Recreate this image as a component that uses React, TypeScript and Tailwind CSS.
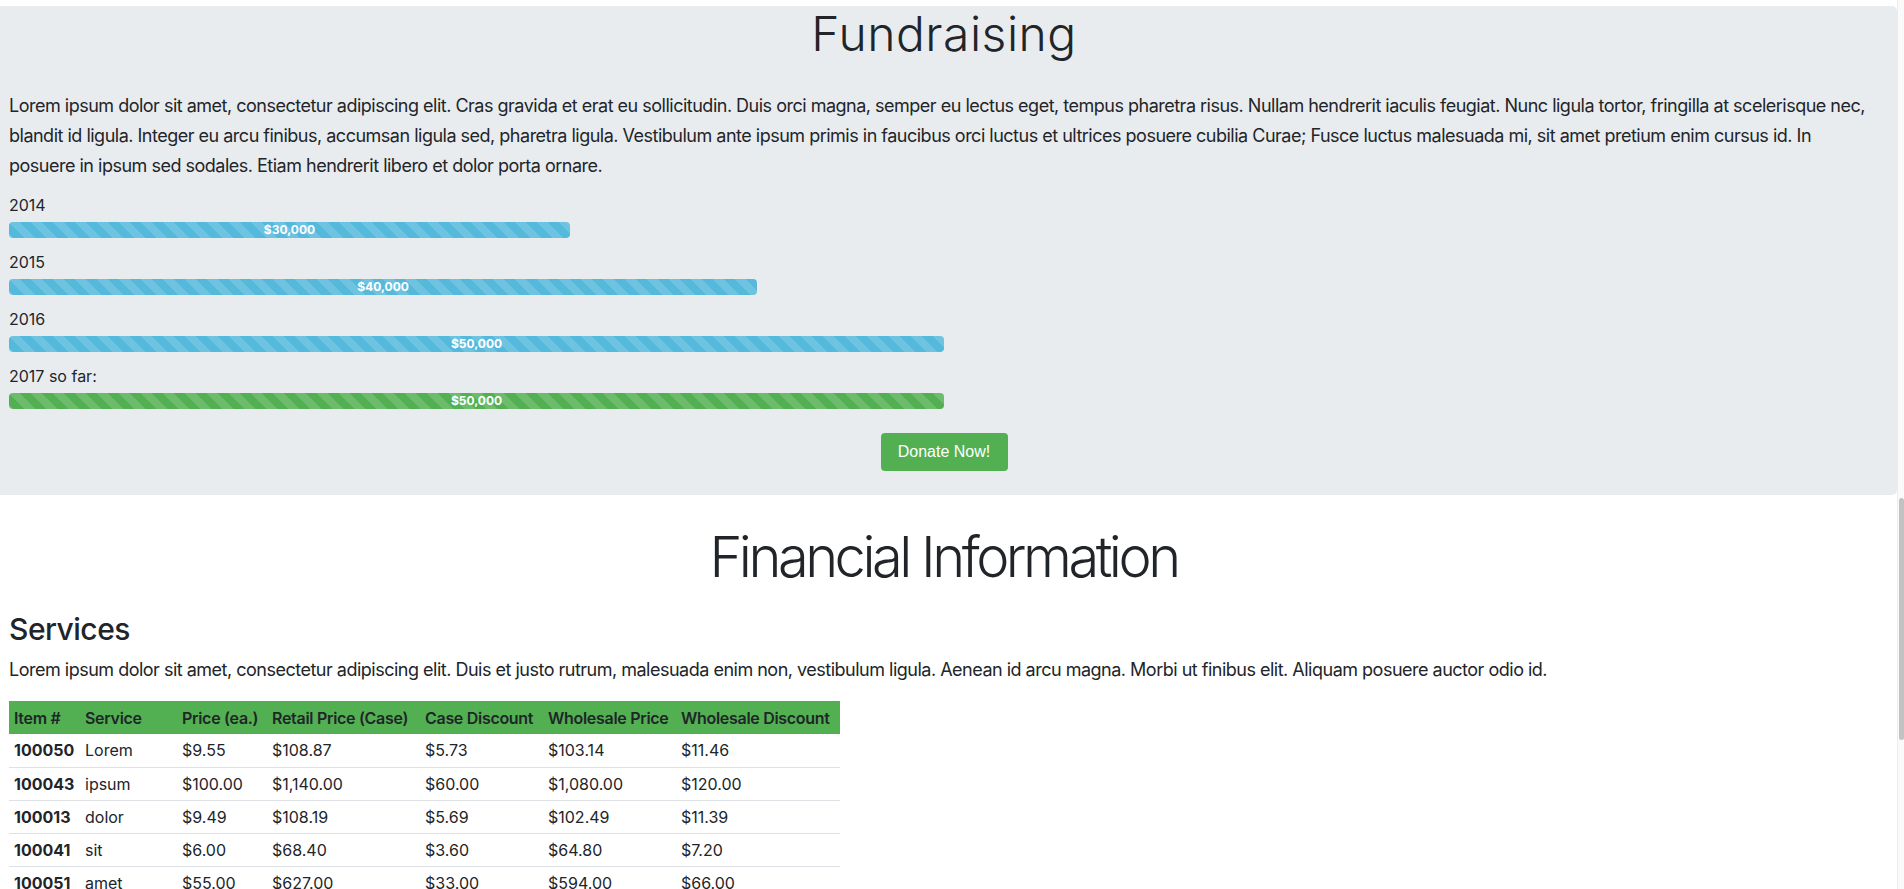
import React from 'react';

const bars = [
  { label: '2014', value: 30000, tone: 'info' },
  { label: '2015', value: 40000, tone: 'info' },
  { label: '2016', value: 50000, tone: 'info' },
  { label: '2017 so far:', value: 50000, tone: 'success' },
];

const services = [
  { id: '100050', name: 'Lorem', price: '$9.55', retail: '$108.87', caseDisc: '$5.73', wholesale: '$103.14', wholesaleDisc: '$11.46' },
  { id: '100043', name: 'ipsum', price: '$100.00', retail: '$1,140.00', caseDisc: '$60.00', wholesale: '$1,080.00', wholesaleDisc: '$120.00' },
  { id: '100013', name: 'dolor', price: '$9.49', retail: '$108.19', caseDisc: '$5.69', wholesale: '$102.49', wholesaleDisc: '$11.39' },
  { id: '100041', name: 'sit', price: '$6.00', retail: '$68.40', caseDisc: '$3.60', wholesale: '$64.80', wholesaleDisc: '$7.20' },
  { id: '100051', name: 'amet', price: '$55.00', retail: '$627.00', caseDisc: '$33.00', wholesale: '$594.00', wholesaleDisc: '$66.00' },
];

const GOAL = 50000;

function ProgressBar({ value, tone }: { value: number; tone: string }) {
  const pct = (value / GOAL) * 100;
  return (
    <div className="w-[935px] h-[16px]">
      <div
        className={`h-[16px] rounded-[4px] flex items-center justify-center text-white text-[12px] font-bold leading-none bg-[linear-gradient(45deg,rgba(255,255,255,.15)_25%,transparent_25%,transparent_50%,rgba(255,255,255,.15)_50%,rgba(255,255,255,.15)_75%,transparent_75%,transparent)] bg-[length:22px_22px] ${
          tone === 'success' ? 'bg-[#52b052]' : 'bg-[#55b9dc]'
        }`}
        style={{ width: `${pct}%` }}
      >
        ${value.toLocaleString('en-US')}
      </div>
    </div>
  );
}

export default function App() {
  return (
    <div className="h-[889px] overflow-hidden flex bg-white text-[#212529] font-['Inter','Noto_Sans',sans-serif]">
      <div className="flex-1 min-w-0">
        {/* Fundraising */}
        <div className="mt-[6px] bg-[#e9ecef] rounded-r-[5px] pl-[9px] pr-[18px] pt-[4px] pb-[24px]">
          <h1 className="text-center text-[48px] leading-[48px] font-light tracking-[0.5px]">Fundraising</h1>
          <p className="mt-[33px] text-[18px] leading-[30px] tracking-[-0.5px]">
            Lorem ipsum dolor sit amet, consectetur adipiscing elit. Cras gravida et erat eu sollicitudin. Duis orci magna, semper eu lectus eget, tempus pharetra risus. Nullam hendrerit iaculis feugiat. Nunc ligula tortor, fringilla at scelerisque nec, blandit id ligula. Integer eu arcu finibus, accumsan ligula sed, pharetra ligula. Vestibulum ante ipsum primis in faucibus orci luctus et ultrices posuere cubilia Curae; Fusce luctus malesuada mi, sit amet pretium enim cursus id. In posuere in ipsum sed sodales. Etiam hendrerit libero et dolor porta ornare.
          </p>
          <div className="mt-[12px] flex flex-col gap-[12px]">
            {bars.map((b) => (
              <div key={b.label}>
                <div className="text-[16px] leading-[24px] mb-[5px]">{b.label}</div>
                <ProgressBar value={b.value} tone={b.tone} />
              </div>
            ))}
          </div>
          <div className="mt-[24px] flex justify-center">
            <button className="h-[38px] w-[127px] rounded-[4px] bg-[#52b052] text-white text-[16px] font-['Liberation_Sans',Arial,sans-serif]">
              Donate Now!
            </button>
          </div>
        </div>

        {/* Financial Information */}
        <div className="pl-[9px] pr-[19px]">
          <h1 className="mt-[29px] text-center text-[56px] leading-[1.2] font-light tracking-[-3.5px]">Financial Information</h1>
          <h2 className="mt-[20px] text-[30px] leading-[1.2] font-medium tracking-[-0.5px]">Services</h2>
          <p className="mt-[8px] text-[18px] leading-[30px] tracking-[-0.5px]">
            Lorem ipsum dolor sit amet, consectetur adipiscing elit. Duis et justo rutrum, malesuada enim non, vestibulum ligula. Aenean id arcu magna. Morbi ut finibus elit. Aliquam posuere auctor odio id.
          </p>
          <table className="mt-[16px] w-[831px] table-fixed border-collapse text-[16px] text-left whitespace-nowrap">
            <thead>
              <tr className="bg-[#52b052] h-[33px] tracking-[-0.3px]">
                <th className="w-[71px] px-[5px] font-semibold">Item #</th>
                <th className="w-[97px] px-[5px] font-semibold">Service</th>
                <th className="w-[90px] px-[5px] font-semibold">Price (ea.)</th>
                <th className="w-[153px] px-[5px] font-semibold">Retail Price (Case)</th>
                <th className="w-[123px] px-[5px] font-semibold">Case Discount</th>
                <th className="w-[133px] px-[5px] font-semibold">Wholesale Price</th>
                <th className="w-[164px] px-[5px] font-semibold">Wholesale Discount</th>
              </tr>
            </thead>
            <tbody>
              {services.map((s, i) => (
                <tr key={s.id} className={`h-[33px] ${i > 0 ? 'border-t border-[#dee2e6]' : ''}`}>
                  <td className="px-[5px] font-bold">{s.id}</td>
                  <td className="px-[5px]">{s.name}</td>
                  <td className="px-[5px]">{s.price}</td>
                  <td className="px-[5px]">{s.retail}</td>
                  <td className="px-[5px]">{s.caseDisc}</td>
                  <td className="px-[5px]">{s.wholesale}</td>
                  <td className="px-[5px]">{s.wholesaleDisc}</td>
                </tr>
              ))}
            </tbody>
          </table>
        </div>
      </div>

      {/* scrollbar */}
      <div className="w-[7px] shrink-0 bg-[#fafafa] border-l border-[#ececec]">
        <div className="mt-[498px] ml-[1px] h-[242px] w-[5px] rounded-full bg-[#c2c2c2]" />
      </div>
    </div>
  );
}
